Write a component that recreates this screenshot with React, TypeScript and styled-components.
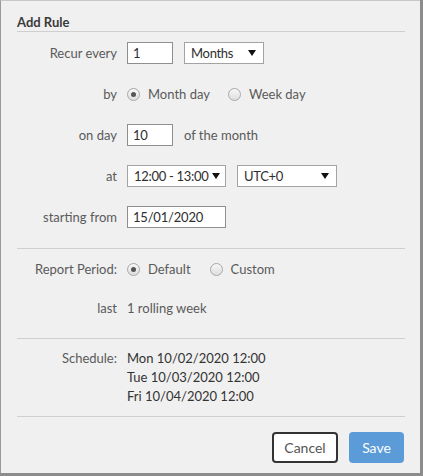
import React from "react";
import styled, { createGlobalStyle } from "styled-components";

const Global = createGlobalStyle`
  html, body { margin: 0; padding: 0; }
  body {
    background: #8c8c8c;
    font-family: Lato, "Open Sans", sans-serif;
    font-size: 13px;
    color: #555;
  }
`;

const Dialog = styled.div`
  box-sizing: border-box;
  width: 420px;
  height: 473px;
  background: #f0f0f0;
  border-left: 1px solid #9a9a9a;
  border-top: 1px solid #c8c8c8;
  padding: 0 15px 0 16px;
  display: flex;
  flex-direction: column;
`;

const Title = styled.div`
  font-size: 13px;
  font-weight: 700;
  color: #3a3a3a;
  line-height: 18px;
  padding-top: 12px;
  border-bottom: 1px solid #cfcfcf;
`;

const Form = styled.div<{ $top: number; $gap: number }>`
  display: grid;
  grid-template-columns: 100px 1fr;
  column-gap: 10px;
  row-gap: ${(p) => p.$gap}px;
  grid-auto-rows: 22px;
  padding-top: ${(p) => p.$top}px;
`;

const Label = styled.div`
  display: flex;
  align-items: center;
  justify-content: flex-end;
  color: #5a5a5a;
  white-space: nowrap;
`;

const Controls = styled.div<{ $gap?: number }>`
  display: flex;
  align-items: center;
  gap: ${(p) => p.$gap ?? 11}px;
  white-space: nowrap;
`;

const TextBox = styled.div<{ $w: number }>`
  box-sizing: border-box;
  width: ${(p) => p.$w}px;
  height: 22px;
  background: #fff;
  border: 1px solid #8f8f8f;
  padding-left: 5px;
  display: flex;
  align-items: center;
  color: #2e2e2e;
  font-size: 13px;
  letter-spacing: -0.2px;
`;

const SelectBox = styled.div<{ $w: number }>`
  box-sizing: border-box;
  width: ${(p) => p.$w}px;
  height: 22px;
  background: #fff;
  border: 1px solid #a3a3a3;
  padding: 0 7px 0 6px;
  display: flex;
  align-items: center;
  justify-content: space-between;
  gap: 4px;
  color: #2e2e2e;
  letter-spacing: -0.3px;
`;

const Arrow = styled.span`
  flex: none;
  width: 0;
  height: 0;
  border-left: 4px solid transparent;
  border-right: 4px solid transparent;
  border-top: 6px solid #111;
`;

const Radio = styled.span<{ $checked?: boolean }>`
  box-sizing: border-box;
  width: 13px;
  height: 13px;
  border-radius: 50%;
  border: 1px solid #a8a8a8;
  background: linear-gradient(#f7f7f7, #dedede);
  display: inline-flex;
  align-items: center;
  justify-content: center;
  &::after {
    content: "";
    display: ${(p) => (p.$checked ? "block" : "none")};
    width: 5px;
    height: 5px;
    border-radius: 50%;
    background: #555;
  }
`;

const Option = styled.label`
  display: inline-flex;
  align-items: center;
  gap: 8px;
  color: #5a5a5a;
`;

const Plain = styled.span`
  color: #5a5a5a;
`;

const Divider = styled.div<{ $top: number }>`
  height: 1px;
  background: #cfcfcf;
  margin-top: ${(p) => p.$top}px;
`;

const ScheduleGrid = styled.div`
  display: grid;
  grid-template-columns: 100px 1fr;
  column-gap: 10px;
  padding-top: 10px;
  line-height: 19px;
`;

const ScheduleLabel = styled.div`
  text-align: right;
  color: #5a5a5a;
`;

const ScheduleList = styled.div`
  display: flex;
  flex-direction: column;
  color: #333;
`;

const Footer = styled.div`
  display: flex;
  justify-content: flex-end;
  gap: 11px;
  padding-top: 15px;
  padding-right: 1px;
`;

const Button = styled.button<{ $primary?: boolean }>`
  box-sizing: border-box;
  height: 31px;
  font-family: Lato, "Open Sans", sans-serif;
  font-size: 14px;
  border-radius: 4px;
  cursor: pointer;
  padding: 0;
  width: ${(p) => (p.$primary ? 55 : 66)}px;
  background: ${(p) => (p.$primary ? "#5b9bd8" : "#fff")};
  color: ${(p) => (p.$primary ? "#fff" : "#555")};
  border: ${(p) => (p.$primary ? "none" : "2px solid #333")};
`;

export default function App() {
  return (
    <>
      <Global />
      <Dialog>
        <Title>Add Rule</Title>
        <Form $top={10} $gap={19}>
          <Label>Recur every</Label>
          <Controls>
            <TextBox $w={46}>1</TextBox>
            <SelectBox $w={80}>
              Months <Arrow />
            </SelectBox>
          </Controls>
          <Label>by</Label>
          <Controls $gap={18}>
            <Option>
              <Radio $checked /> Month day
            </Option>
            <Option>
              <Radio /> Week day
            </Option>
          </Controls>
          <Label>on day</Label>
          <Controls>
            <TextBox $w={46}>10</TextBox>
            <Plain>of the month</Plain>
          </Controls>
          <Label>at</Label>
          <Controls>
            <SelectBox $w={99}>
              12:00 - 13:00 <Arrow />
            </SelectBox>
            <SelectBox $w={100}>
              UTC+0 <Arrow />
            </SelectBox>
          </Controls>
          <Label>starting from</Label>
          <Controls>
            <TextBox $w={99}>15/01/2020</TextBox>
          </Controls>
        </Form>
        <Divider $top={20} />
        <Form $top={9} $gap={17}>
          <Label>Report Period:</Label>
          <Controls $gap={19}>
            <Option>
              <Radio $checked /> Default
            </Option>
            <Option>
              <Radio /> Custom
            </Option>
          </Controls>
          <Label>last</Label>
          <Controls>
            <Plain>1 rolling week</Plain>
          </Controls>
        </Form>
        <Divider $top={19} />
        <ScheduleGrid>
          <ScheduleLabel>Schedule:</ScheduleLabel>
          <ScheduleList>
            <span>Mon 10/02/2020 12:00</span>
            <span>Tue 10/03/2020 12:00</span>
            <span>Fri 10/04/2020 12:00</span>
          </ScheduleList>
        </ScheduleGrid>
        <Divider $top={10} />
        <Footer>
          <Button>Cancel</Button>
          <Button $primary>Save</Button>
        </Footer>
      </Dialog>
    </>
  );
}
